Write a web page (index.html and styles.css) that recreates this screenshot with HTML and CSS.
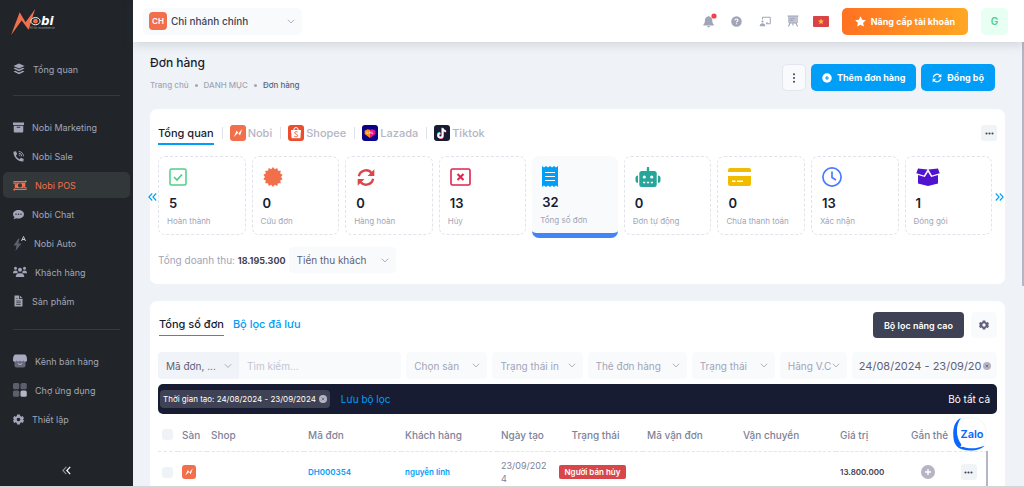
FILE: index.html
```html
<!DOCTYPE html>
<html lang="vi">
<head>
<meta charset="utf-8">
<meta name="viewport" content="width=device-width, initial-scale=1">
<title>Đơn hàng - Nobi POS</title>
<link rel="stylesheet" href="styles.css">
</head>
<body>
<svg class="defs" aria-hidden="true">
  <defs>
    <symbol id="chev" viewBox="0 0 10 6"><path d="M1 .8 5 4.8 9 .8" fill="none" stroke="currentColor" stroke-width="1.1"/></symbol>
    <symbol id="gear" viewBox="0 0 24 24"><path fill="currentColor" fill-rule="evenodd" d="M9 1h6l.8 3.6 2 1.2 3.6-1.2 2.6 5-2.600 2.400 2.600 2.400-2.600 5-3.600-1.200-2 1.200L15 23H9l-.8-3.600-2-1.200-3.600 1.200-2.600-5L2.600 12 0 9.600l2.600-5 3.600 1.200 2-1.200ZM12 8a4 4 0 1 0 0 8 4 4 0 0 0 0-8Z"/></symbol>
    <symbol id="bolt" viewBox="0 0 16 16"><path fill="#fff" d="M3.800 12 6.600 5.600l2 2.700L12.400 3.800 10 10.600 8 7.900Z"/></symbol>
    <symbol id="close" viewBox="0 0 10 10"><circle cx="5" cy="5" r="5" fill="#b5b5c3"/><path d="m3.300 3.300 3.400 3.400m0-3.400L3.300 6.700" stroke="#5e6278" stroke-width="1"/></symbol>
    <symbol id="sync" viewBox="0 0 24 24"><g fill="none" stroke="currentColor" stroke-width="3"><path d="M3 10.500A9 9 0 0 1 19 6.500"/><path d="M21 13.500A9 9 0 0 1 5 17.500"/></g><path fill="currentColor" d="M22.500 1.500V10H14ZM1.500 22.500V14H10Z"/></symbol>
    <symbol id="dots" viewBox="0 0 12 4"><g fill="currentColor"><circle cx="2" cy="2" r="1.400"/><circle cx="6" cy="2" r="1.400"/><circle cx="10" cy="2" r="1.400"/></g></symbol>
  </defs>
</svg>
<div class="app">
  <aside class="sidebar">
    <a class="logo" href="#" aria-label="Nobi">
      <svg width="48" height="28" viewBox="30 25 145 85">
        <path fill="#f1704b" d="M33 107 59 38 77 68 106 28 86 91 65 63Z"/>
        <ellipse cx="107" cy="65" rx="14" ry="11" fill="#212529" stroke="#fff" stroke-width="3"/>
        <circle cx="107" cy="65" r="7" fill="#f1704b"/>
        <text class="logo-name" x="124" y="76">bi</text>
        <text class="logo-tag" x="88" y="88">All for ecommerce</text>
      </svg>
    </a>
    <nav class="nav">
      <a href="#"><svg width="12" height="12" viewBox="0 0 24 24" fill="currentColor"><path d="m12 1 11 5-11 5L1 6Z"/><path d="m1 11 3.500-1.500L12 13l7.500-3.500L23 11l-11 5.500Z"/><path d="m1 17 3.500-1.500L12 19l7.500-3.500L23 17l-11 5.500Z"/></svg>Tổng quan</a>
      <hr>
      <a href="#"><svg width="11" height="11" viewBox="0 0 22 22" fill="currentColor"><path d="M0 1h22v5H0ZM1.500 7.500h19V19a2 2 0 0 1-2 2h-15a2 2 0 0 1-2-2Z"/><path d="M7.500 10.500h7" stroke="#212529" stroke-width="1.800"/></svg>Nobi Marketing</a>
      <a href="#"><svg width="11" height="11" viewBox="0 0 22 22" fill="currentColor"><path d="m1 1.500 5-1 2.500 6-2.800 2.300c1.500 3.300 4 6 7.500 7.500l2.300-2.800 6 2.500-1 5C9.500 21.500.500 12 1 1.500Z"/><path d="M11.500 1a9.500 9.500 0 0 1 9.500 9.500M11.500 4.500a6 6 0 0 1 6 6M11.500 8a2.500 2.500 0 0 1 2.500 2.500" fill="none" stroke="currentColor" stroke-width="1.800"/></svg>Nobi Sale</a>
      <a href="#" class="on" aria-current="page"><svg width="14" height="11" viewBox="0 0 28 22" fill="currentColor"><path d="m24 0 4 3-4 3V4H3v4H1V2h23ZM4 22l-4-3 4-3v2h21v-4h2v6H4Z"/><path fill-rule="evenodd" d="M3.500 5h20l1 1v10.500H4.500l-1-1ZM14 6.500a4.300 4.300 0 1 0 0 8.600 4.300 4.300 0 0 0 0-8.600ZM5.500 7v2.500L8 7Zm17 8v-2.500L20 15Z"/></svg>Nobi POS</a>
      <a href="#"><svg width="11" height="11" viewBox="0 0 22 22" fill="currentColor"><path d="M11 2c6 0 11 3.700 11 8.500S17 19 11 19c-1.500 0-3-.2-4.300-.7L1 20.500l2-4.300C1 14.700 0 12.700 0 10.500 0 5.700 5 2 11 2Z"/><g fill="#212529"><circle cx="6" cy="10.500" r="1.400"/><circle cx="11" cy="10.500" r="1.400"/><circle cx="16" cy="10.500" r="1.400"/></g></svg>Nobi Chat</a>
      <a href="#"><svg width="13" height="15" viewBox="0 0 26 30"><path fill="#5d606c" d="M11 5 1 19h6L5 30 17 15h-6.500L13 5Z"/><path d="m17 10 4-9 4 9m-7-3h6" fill="none" stroke="#c3c4d2" stroke-width="2"/></svg>Nobi Auto</a>
      <a href="#"><svg width="14" height="12" viewBox="0 0 28 24" fill="currentColor"><circle cx="5" cy="4.500" r="3"/><circle cx="23" cy="4.500" r="3"/><circle cx="14" cy="7.500" r="4"/><path d="M0 14q0-5 5-5 3 0 4 1.500-.5 2 1 4H0ZM28 14q0-5-5-5-3 0-4 1.500.5 2-1 4h10ZM5.500 22q0-6.500 6-7.500h5q6 1 6 7.500Z"/></svg>Khách hàng</a>
      <a href="#"><svg width="11" height="12" viewBox="0 0 22 24" fill="currentColor"><path d="M3 1h9v7h7v15H3ZM13.500 1 19 6.500h-5.500Z"/><path d="M6.500 12h9m-9 3.500h9m-9 3.500h9M6.500 7H9" stroke="#212529" stroke-width="1.400"/></svg>Sản phẩm</a>
      <hr class="low">
      <a href="#"><svg width="14" height="14" viewBox="0 0 28 28"><path fill="#666978" d="M3 12h22v11a4 4 0 0 1-4 4H7a4 4 0 0 1-4-4Z"/><path fill="#a8aac0" d="M5 1h18q4 0 5 9a3.500 3.500 0 0 1-7 3 4 4 0 0 1-7 0 4 4 0 0 1-7 0 3.500 3.500 0 0 1-7-3Q1 1 5 1Z"/><path d="M9.500 19q4.500 4 9 0" fill="none" stroke="#c3c4d2" stroke-width="1.800"/></svg>Kênh bán hàng</a>
      <a href="#"><svg width="14" height="14" viewBox="0 0 28 28" fill="#5d606c"><rect width="12.500" height="12.500" rx="3"/><rect x="15" width="12.500" height="12.500" rx="3"/><rect y="15" width="12.500" height="12.500" rx="3"/><rect x="15" y="15" width="12.500" height="12.500" rx="3" fill="#b5b5c3"/></svg>Chợ ứng dụng</a>
      <a href="#"><svg width="11" height="11"><use href="#gear"/></svg>Thiết lập</a>
    </nav>
    <button class="collapse" aria-label="Thu gọn"><svg width="9" height="9" viewBox="0 0 9 9" fill="none" stroke-width="1.200"><path d="M4.300.8.900 4.500l3.400 3.700" stroke="#8a8c99"/><path d="M8.200.8 4.800 4.500l3.400 3.700" stroke="#fff"/></svg></button>
  </aside>

  <div class="body">
    <header class="topbar">
      <label class="branch">
        <span class="branch-badge">CH</span>
        <select aria-label="Chi nhánh"><option>Chi nhánh chính</option></select>
        <svg width="8" height="5"><use href="#chev"/></svg>
      </label>
      <div class="tools">
        <button class="tool bell" aria-label="Thông báo"><svg width="16" height="16" viewBox="0 0 16 16"><path fill="#a1a5b7" d="M6.800 3.500a1 1 0 0 1 1.600 0c2 .6 2.900 2 2.900 4 0 2.400.6 3 1.500 3.900v1H2.400v-1c.9-.9 1.500-1.500 1.500-3.900 0-2 .9-3.400 2.900-4ZM6.200 13h2.800a1.400 1.400 0 0 1-2.800 0Z"/><circle cx="13" cy="3" r="2.600" fill="#f1414e"/></svg></button>
        <button class="tool" aria-label="Trợ giúp"><svg width="11" height="11" viewBox="0 0 22 22"><circle cx="11" cy="11" r="10.500" fill="#a1a5b7"/><path d="M8 8.500q0-2.500 3-2.500t3 2.500q0 1.500-1.800 2.300-1.200.6-1.200 1.900M11 14.500v2" fill="none" stroke="#fff" stroke-width="2.200"/></svg></button>
        <button class="tool" aria-label="Đào tạo"><svg width="12" height="11" viewBox="0 0 24 22" fill="none" stroke="#a1a5b7" stroke-width="2"><path d="M7 7V2.500h15.500v13H14"/><path d="M14 14h4"/><circle cx="7" cy="11" r="2.200" fill="#a1a5b7" stroke="none"/><path fill="#a1a5b7" d="M2 19.500q.5-4 5-4t5 4Z"/></svg></button>
        <button class="tool" aria-label="Bảng tin"><svg width="12" height="12" viewBox="0 0 24 24"><path fill="#c3c4d2" d="M2 2h20v14H2Z"/><path fill="none" stroke="#a1a5b7" stroke-width="2.200" d="M1 2h22M5 7.500h11M5 11h7M6 16l-3 7m15-7 3 7M12 16v5M4 16h16"/></svg></button>
        <button class="tool" aria-label="Ngôn ngữ"><svg width="16" height="11" viewBox="0 0 16 11"><rect width="16" height="11" rx="1" fill="#d94246"/><path fill="#ffc233" d="m8 2.500.8 2.100 2.200.1-1.700 1.400.6 2.200L8 7.100 6.100 8.300l.6-2.200L5 4.700l2.200-.1Z"/></svg></button>
        <button class="upgrade"><svg width="11" height="11" viewBox="0 0 20 20" fill="#fff"><path d="m10 .5 3 6.100 6.700 1-4.900 4.700 1.200 6.700-6-3.200L4 19l1.200-6.700L.300 7.600l6.700-1Z"/></svg>Nâng cấp tài khoản</button>
        <button class="avatar">G</button>
      </div>
    </header>

    <main class="main">
      <div class="page-head">
        <div>
          <h1>Đơn hàng</h1>
          <nav class="crumbs" aria-label="Đường dẫn"><a href="#">Trang chủ</a><i></i><a href="#">DANH MỤC</a><i></i><b>Đơn hàng</b></nav>
        </div>
        <div class="actions">
          <button class="more-v" aria-label="Thêm"><svg width="4" height="10" viewBox="0 0 4 10" fill="#3f4254"><circle cx="2" cy="1.200" r="1"/><circle cx="2" cy="5" r="1"/><circle cx="2" cy="8.800" r="1"/></svg></button>
          <button class="primary"><svg width="10" height="10" viewBox="0 0 20 20"><circle cx="10" cy="10" r="9.500" fill="#fff"/><path d="M10 6v8m-4-4h8" stroke="#009ef7" stroke-width="2.200"/></svg>Thêm đơn hàng</button>
          <button class="primary"><svg width="10" height="10"><use href="#sync"/></svg>Đồng bộ</button>
        </div>
      </div>

      <section class="card overview">
        <div class="channels">
          <a href="#" class="ch on">Tổng quan</a>
          <a href="#" class="ch"><svg class="coral" width="16" height="16"><use href="#bolt"/></svg>Nobi</a>
          <a href="#" class="ch"><svg class="orange" width="16" height="16" viewBox="0 0 16 16"><path fill="#fff" d="M3 5h10l-.6 8.200H3.600Z"/><path d="M5.800 5q0-2.500 2.200-2.500T10.200 5" fill="none" stroke="#fff"/><path d="M9.700 7.200C8.500 6.200 6.500 6.700 6.700 8s3 1 3 2.500-2.200 1.700-3.500.6" fill="none" stroke="#ee4d2d" stroke-width=".9"/></svg>Shopee</a>
          <a href="#" class="ch"><svg class="navy" width="16" height="16" viewBox="0 0 16 16"><path fill="#ff9100" d="m8 4.800-2.500-.6L2.600 5.700v3.200L8 13Z"/><path fill="#f0148c" d="m8 4.800 2.500-.6 2.900 1.500v3.200L8 13Z"/><path d="M5 6.500v2h1.200M7.200 8.500V7h1.200v1.500M9.800 6.500v2H11" fill="none" stroke="#fff" stroke-width=".6"/></svg>Lazada</a>
          <a href="#" class="ch"><svg class="ink" width="16" height="16" viewBox="0 0 16 16" fill="none" stroke-width="1.700"><path stroke="#25f4ee" d="M8.200 2.800v7.400a2.200 2.200 0 1 1-2.300-2.300M8.200 3q.6 2.600 3.200 2.900"/><path stroke="#fe2c55" d="M9.200 3.600V11a2.200 2.200 0 1 1-2.300-2.300M9.200 3.800q.6 2.600 3.200 2.900"/><path stroke="#fff" d="M8.700 3.200v7.400a2.200 2.200 0 1 1-2.300-2.300M8.700 3.400q.6 2.600 3.200 2.900"/></svg>Tiktok</a>
          <button class="more-h" aria-label="Thêm"><svg width="9" height="3"><use href="#dots"/></svg></button>
        </div>
        <div class="stats">
          <button class="arrow prev" aria-label="Trước"><svg width="9" height="8" viewBox="0 0 9 8"><path d="M4.200.5.900 4l3.300 3.500M8.200.5 4.900 4l3.300 3.500"/></svg></button>
          <a href="#" class="stat"><svg width="18" height="18" viewBox="0 0 18 18" fill="none" stroke="#50cd89"><rect x="1" y="1" width="16" height="16" rx="1.500" stroke-width="1.500"/><path d="m5 9 3 3 5-5.500" stroke-width="1.700"/></svg><strong>5</strong><span>Hoàn thành</span></a>
          <a href="#" class="stat"><svg width="20" height="20" viewBox="-10 -10 20 20"><path fill="#f1704b" d="M0-10 1.800-7.800 4.300-9 5-6.300 7.800-6.200 7.200-3.500 9.700-2.200 8 0 9.700 2.200 7.200 3.500 7.800 6.200 5 6.300 4.300 9 1.800 7.800 0 10-1.800 7.800-4.300 9-5 6.300-7.800 6.200-7.200 3.500-9.700 2.200-8 0-9.700-2.200-7.200-3.500-7.800-6.200-5-6.300-4.300-9-1.800-7.800Z"/></svg><strong>0</strong><span>Cứu đơn</span></a>
          <a href="#" class="stat"><svg class="red" width="20" height="19"><use href="#sync"/></svg><strong>0</strong><span>Hàng hoàn</span></a>
          <a href="#" class="stat"><svg width="21" height="18" viewBox="0 0 21 18" fill="none" stroke="#e0234e"><rect x="1" y="1" width="19" height="16" rx="1.500" stroke-width="1.600"/><path d="m7.500 6 6 6m0-6-6 6" stroke-width="2"/></svg><strong>13</strong><span>Hủy</span></a>
          <a href="#" class="stat active"><svg width="16" height="21" viewBox="0 0 16 21"><path fill="#009ef7" d="m0 0 2 1.500L4 0l2 1.500L8 0l2 1.500L12 0l2 1.500L16 0v21l-2-1.500-2 1.500-2-1.500L8 21l-2-1.500L4 21l-2-1.500L0 21Z"/><path d="M3 6.500h10M3 10.500h10M3 14.500h10" stroke="#fff" stroke-width="1.200"/></svg><strong>32</strong><span>Tổng số đơn</span></a>
          <a href="#" class="stat"><svg width="26" height="20" viewBox="0 0 26 20"><path fill="#26a69a" d="M11.800 1a1 1 0 0 1 2.400 0v3h5a2.500 2.500 0 0 1 2.500 2.500v11a2.500 2.500 0 0 1-2.500 2.500H6.800a2.500 2.500 0 0 1-2.500-2.500v-11A2.500 2.500 0 0 1 6.800 4h5ZM3 8.500V16A2.500 2.500 0 0 1 .500 14v-3A2.500 2.500 0 0 1 3 8.500ZM23 8.500V16a2.500 2.500 0 0 0 2.500-2v-3A2.500 2.500 0 0 0 23 8.500Z"/><g fill="#fff"><circle cx="9.300" cy="10" r="1.600"/><circle cx="16.700" cy="10" r="1.600"/><path d="M8 14.800h2.200v1.400H8Zm3.900 0h2.200v1.400h-2.200Zm3.900 0H18v1.400h-2.200Z"/></g></svg><strong>0</strong><span>Đơn tự động</span></a>
          <a href="#" class="stat"><svg width="23" height="18" viewBox="0 0 23 18"><path fill="#f1bc00" d="M0 4V2a2 2 0 0 1 2-2h19a2 2 0 0 1 2 2v2ZM0 8h23v8a2 2 0 0 1-2 2H2a2 2 0 0 1-2-2Z"/><path d="M4 13.300h3.500m1.500 0h6" stroke="#fff" stroke-width="1.400"/></svg><strong>0</strong><span>Chưa thanh toán</span></a>
          <a href="#" class="stat"><svg width="20" height="20" viewBox="0 0 20 20" fill="none" stroke="#4b7bff" stroke-width="1.700"><circle cx="10" cy="10" r="9.100"/><path d="M10 4.500v6l4 2.500"/></svg><strong>13</strong><span>Xác nhận</span></a>
          <a href="#" class="stat"><svg width="24" height="18" viewBox="0 0 24 18" fill="#5014d0"><path d="m2 .500 9.500 1L8 7.500.300 5.300ZM22 .500l-9.500 1 3.500 6 7.700-2.200ZM2 7l6.800 2L12 4l3.200 5L22 7v8.500L12 18 2 15.500Z"/></svg><strong>1</strong><span>Đóng gói</span></a>
          <button class="arrow next" aria-label="Sau"><svg width="9" height="8" viewBox="0 0 9 8"><path d="m.8.500 3.300 3.500L.8 7.500M4.800.5 8.100 4 4.800 7.500"/></svg></button>
        </div>
        <div class="revenue">
          <span>Tổng doanh thu: <b>18.195.300</b></span>
          <label class="pick strong"><select aria-label="Loại doanh thu"><option>Tiền thu khách</option></select><svg width="8" height="5"><use href="#chev"/></svg></label>
        </div>
      </section>

      <section class="card orders">
        <div class="orders-head">
          <nav class="views"><a href="#" class="on">Tổng số đơn</a><a href="#">Bộ lọc đã lưu</a></nav>
          <button class="dark">Bộ lọc nâng cao</button>
          <button class="cog" aria-label="Cài đặt"><svg width="10" height="10"><use href="#gear"/></svg></button>
        </div>
        <form class="filters">
          <div class="search">
            <label class="pick key"><select aria-label="Tìm theo"><option>Mã đơn, ...</option></select><svg width="8" height="6"><use href="#chev"/></svg></label>
            <input type="text" placeholder="Tìm kiếm..." aria-label="Tìm kiếm">
          </div>
          <label class="pick"><select aria-label="Sàn"><option>Chọn sàn</option></select><svg width="8" height="5"><use href="#chev"/></svg></label>
          <label class="pick"><select aria-label="Trạng thái in"><option>Trạng thái in</option></select><svg width="8" height="5"><use href="#chev"/></svg></label>
          <label class="pick"><select aria-label="Thẻ đơn hàng"><option>Thẻ đơn hàng</option></select><svg width="8" height="5"><use href="#chev"/></svg></label>
          <label class="pick"><select aria-label="Trạng thái"><option>Trạng thái</option></select><svg width="8" height="5"><use href="#chev"/></svg></label>
          <label class="pick"><select aria-label="Hãng vận chuyển"><option>Hãng V.C</option></select><svg width="8" height="5"><use href="#chev"/></svg></label>
          <label class="date"><input type="text" value="24/08/2024 - 23/09/2024" aria-label="Khoảng thời gian"><svg width="8" height="8"><use href="#close"/></svg></label>
        </form>
        <div class="applied">
          <span class="chip">Thời gian tạo: 24/08/2024 - 23/09/2024<button aria-label="Xóa bộ lọc"><svg width="8" height="8"><use href="#close"/></svg></button></span>
          <a href="#" class="save">Lưu bộ lọc</a>
          <a href="#" class="clear">Bỏ tất cả</a>
        </div>
        <div class="table-wrap">
          <table>
            <colgroup><col class="w20"><col class="w29"><col class="w97"><col class="w97"><col class="w96"><col class="w51"><col class="w95"><col class="w96"><col class="w97"><col class="w71"><col class="w42"><col class="w39"></colgroup>
            <thead><tr><th><input type="checkbox" aria-label="Chọn tất cả"></th><th>Sàn</th><th>Shop</th><th>Mã đơn</th><th>Khách hàng</th><th>Ngày tạo</th><th class="mid">Trạng thái</th><th>Mã vận đơn</th><th>Vận chuyển</th><th>Giá trị</th><th>Gắn thẻ</th><th></th></tr></thead>
            <tbody><tr><td><input type="checkbox" aria-label="Chọn DH000354"></td><td><svg class="coral small" width="14" height="14"><use href="#bolt"/></svg></td><td></td><td><a href="#">DH000354</a></td><td><a href="#">nguyễn linh</a></td><td class="day">23/09/2024</td><td class="mid status"><span class="badge">Người bán hủy</span></td><td></td><td></td><td>13.800.000</td><td class="mid"><button class="add" aria-label="Gắn thẻ"><svg width="14" height="14" viewBox="0 0 14 14"><circle cx="7" cy="7" r="7" fill="#b5b5c3"/><path d="M7 4v6M4 7h6" stroke="#fff" stroke-width="1.400"/></svg></button></td><td class="mid"><button class="more-h" aria-label="Thao tác"><svg width="9" height="3"><use href="#dots"/></svg></button></td></tr></tbody>
          </table>
          <i class="thumb"></i>
          <button class="zalo"><svg width="34" height="34" viewBox="0 0 34 34" aria-hidden="true"><rect x="1" y="1" width="32" height="31" rx="13" fill="#fff" stroke="#e8eef7" stroke-width=".6"/><path fill="#0a68ff" d="M8 1C1.500 4-1 12 .800 23c1.200 7 7 10.500 16.200 10.500 7 0 12-1.500 14.500-5-6 3-15 4-21.500 1.200-1 .5-2 .5-3 .3 1-.6 1.300-1.500 1.300-2.500C2.500 20 2.500 8 8 1Z"/></svg><span>Zalo</span></button>
        </div>
      </section>
      <i class="page-thumb"></i>
    </main>
  </div>
</div>
</body>
</html>
```

FILE: styles.css
```css
* { box-sizing: border-box; }
body { margin: 0; font-family: Inter, "Noto Sans", sans-serif; font-size: 10px; color: #181c32; background: #d5d6d8; }
a { color: inherit; text-decoration: none; }
button, input, select { font: inherit; color: inherit; border: 0; margin: 0; padding: 0; background: none; }
button { display: flex; align-items: center; justify-content: center; cursor: pointer; }
select { appearance: none; outline: 0; }
svg { display: block; flex: none; }
.defs { position: absolute; width: 0; height: 0; }

.app { display: flex; height: 100vh; border-bottom: 2px solid #d5d6d8; overflow: hidden; }

/* Sidebar */
.sidebar { flex: none; width: 133px; display: flex; flex-direction: column; background: #212529; color: #a1a5b7; }
.logo { padding: 8px 10px 0; }
.logo-name { font: italic bold 36px "DejaVu Sans", sans-serif; fill: #fff; }
.logo-tag { font: 9px Inter, sans-serif; fill: #9a9ca6; }
.nav { display: flex; flex-direction: column; gap: 3px; padding: 20px 3px 0; font-size: 9px; }
.nav a { display: flex; align-items: center; gap: 8px; height: 26px; padding-left: 10px; border-radius: 5px; }
.nav .on { background: #32373a; color: #f1704b; }
.nav hr { width: calc(100% - 20px); height: 1px; margin: 10px auto 15px; border: 0; background: #343946; }
.nav .low { margin-top: 12px; }
.collapse { margin: auto auto 11px; }

/* Top bar */
.body { flex: 1; min-width: 0; display: flex; flex-direction: column; }
.topbar { position: relative; z-index: 1; flex: none; display: flex; align-items: center; justify-content: space-between; height: 42px; padding: 0 16px 0 10px; background: #fff; box-shadow: 0 2px 10px rgba(70, 80, 90, .2); }
.branch { display: flex; align-items: center; gap: 4px; width: 159px; height: 27px; padding: 0 7px 0 6px; border-radius: 5px; background: #f9fafc; color: #a1a5b7; }
.branch-badge { display: grid; place-items: center; width: 18px; height: 18px; border-radius: 4px; background: #f1704b; color: #fff; font-size: 8px; font-weight: 600; }
.branch select { flex: 1; min-width: 0; font-weight: 500; color: #3f4254; }
.tools { display: flex; align-items: center; }
.tool { height: 27px; min-width: 28px; }
.upgrade { gap: 5px; height: 27px; margin: 0 13px 0 7px; padding: 0 13px; border-radius: 5px; background: linear-gradient(90deg, #ff7122, #ffa723); color: #fff; font-size: 9px; font-weight: 700; }
.avatar { width: 27px; height: 27px; border-radius: 5px; background: #e8fff3; color: #50cd89; font-weight: 600; }

/* Page heading */
.main { position: relative; flex: 1; min-height: 0; display: flex; flex-direction: column; padding: 13px 19px 0 17px; background: #eff3f7; }
.page-head { display: flex; justify-content: space-between; align-items: flex-end; padding-right: 10px; margin-bottom: 18px; }
h1 { margin: 0 0 8px; font-size: 12px; line-height: 16px; font-weight: 500; }
.crumbs { display: flex; align-items: center; gap: 6px; font-size: 8px; line-height: 12px; font-weight: 500; color: #a1a5b7; }
.crumbs i { width: 3px; height: 3px; border-radius: 50%; background: #a1a5b7; }
.crumbs b { font-weight: 500; color: #5e6278; }
.actions { display: flex; gap: 5px; }
.actions button { height: 27px; border-radius: 5px; }
.more-v { width: 24px; border: 1px solid #e4e6ef; background: #f9fafc; }
.primary { gap: 5px; padding: 0 11px; background: #009ef7; color: #fff; font-size: 9px; font-weight: 700; }

.card { flex: none; border-radius: 7px; background: #fff; }

/* Overview */
.overview { padding: 16px 8px 11px; margin-bottom: 17px; }
.channels { display: flex; align-items: flex-start; height: 20px; margin-bottom: 11px; font-size: 11px; line-height: 16px; font-weight: 500; color: #b5b5c3; }
.ch { display: flex; gap: 2px; }
.ch + .ch::before { content: ""; width: 1px; height: 12px; margin: 2px 5px 0 8px; background: #dfe1e8; }
.ch.on { height: 20px; border-bottom: 2px solid #009ef7; color: #181c32; }
.ch svg, .small { border-radius: 3px; }
.coral { background: #f1704b; }
.orange { background: #ee4d2d; }
.navy { background: #0b0088; }
.ink { background: #181c32; }
.more-h { width: 16px; height: 16px; border-radius: 3px; background: #f1f4f7; color: #3f4254; }
.channels .more-h { margin-left: auto; }
.stats { position: relative; display: flex; gap: 6px; height: 79px; margin-right: 5px; }
.stat { flex: 1; min-width: 0; display: grid; grid-template-rows: 22px 29px 8px; align-items: center; padding: 9px 0 0 8px; border: 1px dashed #e1e3ea; border-radius: 7px; }
.stat svg { margin-left: 2px; }
.stat .red { color: #d9464a; }
.stat strong { margin-left: 2px; font-size: 13px; font-weight: 600; }
.stat span { font-size: 8px; line-height: 8px; color: #a1a5b7; white-space: nowrap; }
.stat.active { height: 82px; border-style: solid; border-width: 0 0 5px; border-color: #4285f7; background: #f8fafc; }
.arrow { position: absolute; top: 37px; z-index: 1; }
.arrow svg { fill: none; stroke: #009ef7; stroke-width: 1.1; }
.prev { left: -10px; }
.next { right: -12px; }
.revenue { display: flex; align-items: center; gap: 3px; margin-top: 12px; color: #a1a5b7; }
.revenue b { font-size: 9px; font-weight: 700; color: #3f4254; }

/* Selects */
.pick { display: flex; align-items: center; min-width: 0; height: 27px; padding: 0 7px 0 8px; border-radius: 4px; background: #f9fafc; color: #a1a5b7; }
.pick select { flex: 1; min-width: 0; }
.pick.strong { width: 107px; height: 26px; }
.pick.strong select, .pick.key select { color: #5e6278; }

/* Orders */
.orders { flex: 1; min-height: 0; padding: 11px 8px 0; border-radius: 7px 7px 0 0; overflow: hidden; }
.orders-head { display: flex; gap: 7px; margin-bottom: 14px; }
.views { display: flex; gap: 9px; margin-right: auto; padding-left: 1px; font-size: 11px; line-height: 24px; font-weight: 500; color: #009ef7; }
.views a { height: 24px; }
.views .on { border-bottom: 1px solid #009ef7; color: #181c32; }
.dark { height: 26px; padding: 0 11px; border-radius: 4px; background: #3f4254; color: #fff; font-size: 9px; font-weight: 600; }
.cog { width: 26px; height: 26px; border-radius: 4px; background: #f9fafc; color: #5e6278; }
.filters { display: grid; grid-template-columns: 243fr 81fr 90fr 99fr 83fr 67fr 145fr; gap: 5px; margin-bottom: 5px; }
.search { min-width: 0; display: flex; }
.search .pick { width: 81px; border-radius: 4px 0 0 4px; background: #f0f3f7; }
.search input { flex: 1; min-width: 0; padding: 0 8px; border-radius: 0 4px 4px 0; background: #f9fafc; }
.search input::placeholder { color: #c3c4d2; }
.date { min-width: 0; display: flex; align-items: center; gap: 1px; padding: 0 6px 0 7px; border-radius: 4px; background: #f9fafc; color: #5e6278; font-size: 11px; }
.date input { flex: 1; min-width: 0; }
.applied { display: flex; align-items: center; height: 30px; padding: 0 7px 0 2px; border-radius: 5px; background: #181c32; color: #fff; }
.chip { display: flex; align-items: center; gap: 3px; height: 18px; padding: 0 3px; border-radius: 4px; background: #3f4254; font-size: 8px; }
.save { margin-left: 11px; color: #009ef7; }
.clear { margin-left: auto; }

.table-wrap { position: relative; padding-right: 9px; }
table { width: 100%; table-layout: fixed; border-collapse: collapse; }
th, td { padding: 0 0 0 4px; text-align: left; white-space: nowrap; }
th { height: 37px; padding-top: 5px; border-bottom: 1px dashed #e4e6ef; font-weight: 500; color: #7e8299; }
td { height: 42px; font-size: 8px; font-weight: 600; color: #3f4254; }
td a { color: #009ef7; }
th.mid, td.mid { padding-left: 0; text-align: center; }
td.status { padding-right: 6px; }
td.day { font-size: 9px; line-height: 13px; font-weight: 400; color: #7e8299; white-space: normal; word-break: break-all; }
td button { margin: 0 auto; }
input[type="checkbox"] { appearance: none; display: block; width: 11px; height: 11px; border-radius: 3px; background: #eff3f7; }
.badge { display: inline-block; padding: 0 6px; border-radius: 2px; background: #d9464a; color: #fff; font-size: 8px; line-height: 14px; font-weight: 600; }
.w20 { width: 20px; } .w29 { width: 29px; } .w39 { width: 39px; } .w42 { width: 42px; } .w51 { width: 51px; } .w71 { width: 71px; }
.w95 { width: 95px; } .w96 { width: 96px; } .w97 { width: 97px; }

/* Floating chat button and scroll thumbs */
.zalo { position: absolute; top: 3px; right: 10px; display: grid; }
.zalo > * { grid-area: 1 / 1; }
.zalo span { align-self: center; padding-left: 4px; font: 600 11px Inter, sans-serif; color: #0a68ff; }
.thumb { position: absolute; top: 37px; right: 9px; bottom: 0; width: 2px; background: #b5b5c3; }
.page-thumb { position: absolute; top: 0; right: 0; width: 2px; height: 55%; background: #b5b5c3; }
```
